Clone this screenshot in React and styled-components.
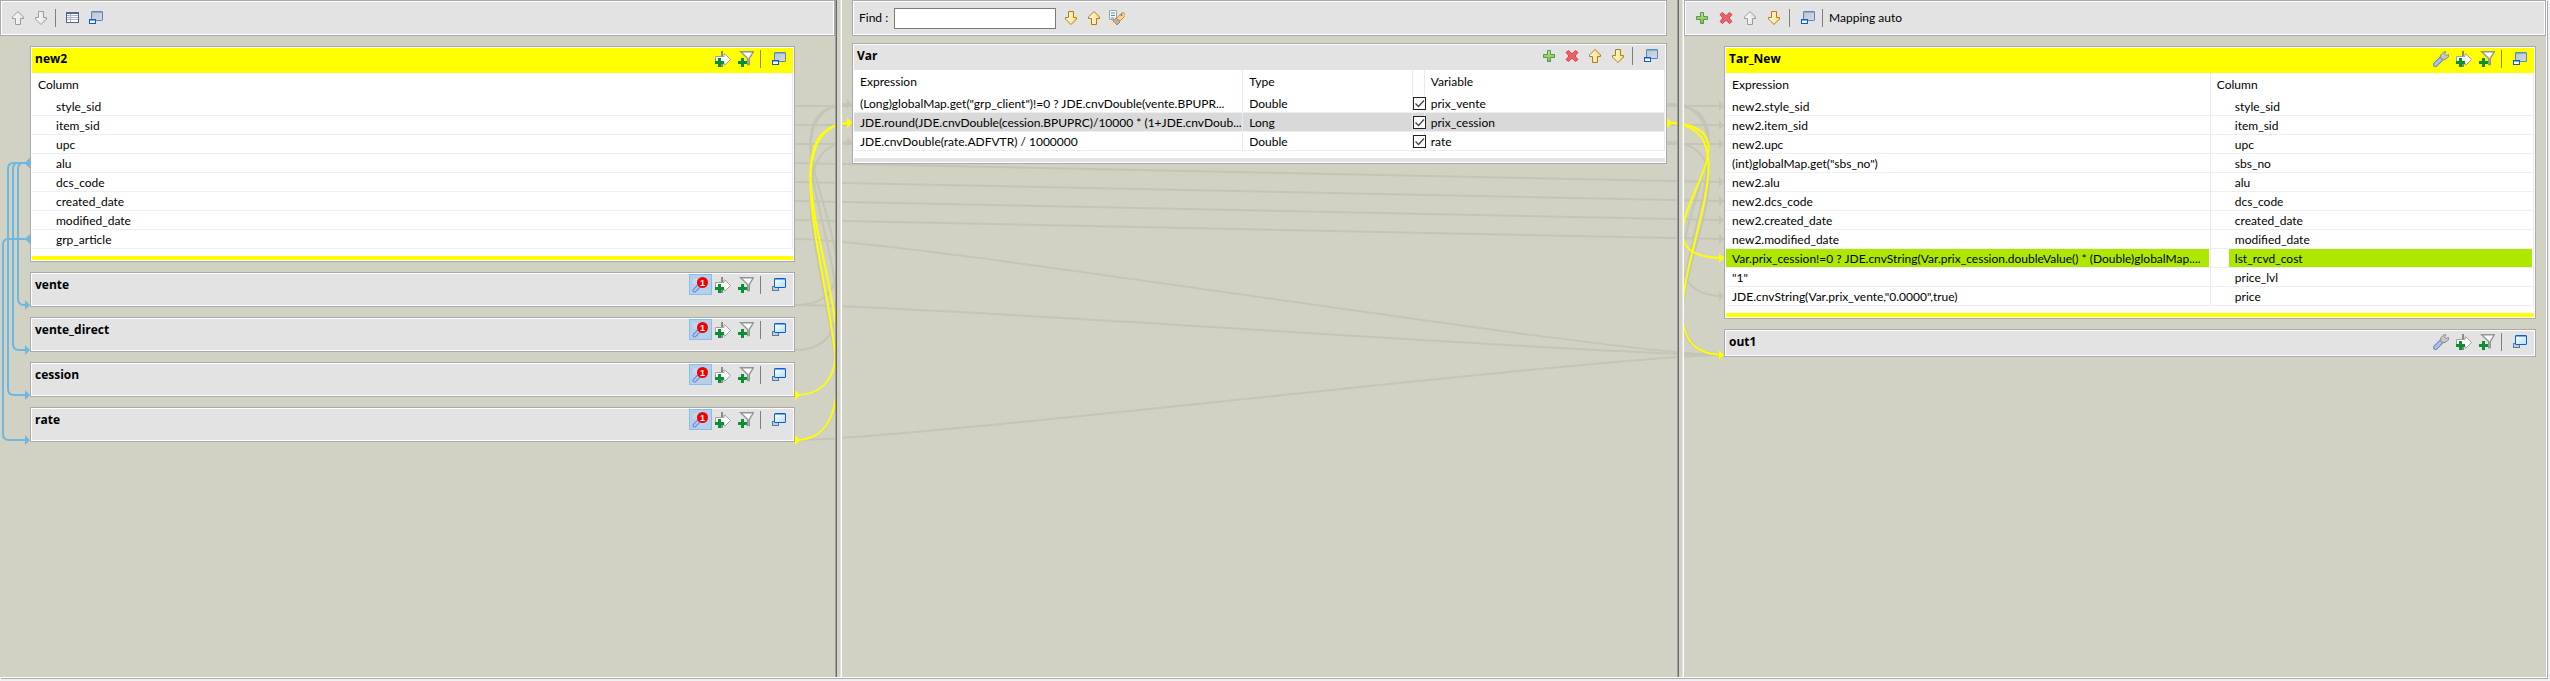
import React from "react";
import styled, { createGlobalStyle, css } from "styled-components";

const color = {
  canvas: "#d1d2c3",
  bar: "#e3e3e3",
  edge: "#a9a9af",
  yellow: "#ffff00",
  lime: "#aee800",
  wire: "#c4c5b6",
  join: "#6cb8e2",
  line: "#eeeef0",
  divider: "#e4ebf4",
};

const GlobalStyle = createGlobalStyle`
  *, *::before, *::after { box-sizing: border-box; }
  body {
    margin: 0;
    background: #f0f0f0;
    color: #000;
    font: 12px/16px Lato, "Open Sans", sans-serif;
  }
`;

/* ---------- layout ---------- */

const Frame = styled.main`
  display: flex;
  min-height: 100vh;
  padding: 0 2px 2px 0;
`;

const Workspace = styled.div`
  position: relative;
  flex: 1;
  min-width: 0;
  display: grid;
  grid-template-columns: minmax(0, 835fr) 7px minmax(0, 835fr) 7px minmax(0, 862fr);
  background: ${color.canvas};
  border: solid #fff;
  border-width: 0 1px 1px 0;
  box-shadow: 1px 1px 0 ${color.edge};
  margin: 0 1px 1px 0;
`;

const Wires = styled.svg`
  position: absolute;
  top: 0;
  left: 0;
  width: 100%;
  height: 677px;
  pointer-events: none;
`;

const Pane = styled.section`
  position: relative;
  display: flex;
  flex-direction: column;
  min-width: 0;
  padding: 0 ${(p) => p.$inset || 0}px;
`;

const Sash = styled.div`
  position: relative;
  background: ${color.canvas};
  border-left: 1px solid #a0a0a0;
  border-right: 1px solid #fff;
  box-shadow: inset 1px 0 #696969, inset -1px 0 #e3e3e3;
`;

const bevel = css`
  border: 1px solid ${color.edge};
  background: ${color.bar};
  box-shadow: inset 0 0 0 1px #fff;
`;

const Toolbar = styled.div`
  ${bevel}
  display: flex;
  align-items: center;
  height: 36px;
  padding: 0 6px;
  gap: ${(p) => p.$gap || 0}px;
`;

const Tables = styled.div`
  display: flex;
  flex-direction: column;
  gap: 10px;
  padding: ${(p) => p.$pad};
`;

const Card = styled.article`
  background: #fff;
  border: 1px solid ${color.edge};
  padding: 1px;
`;

const CardHeader = styled.header`
  display: flex;
  justify-content: space-between;
  align-items: flex-start;
  height: ${(p) => p.$height || 25}px;
  padding: 0 3px;
  background: ${(p) => (p.$active ? color.yellow : color.bar)};
`;

const CardTitle = styled.h2`
  margin: 0;
  padding-top: 3px;
  font-family: "Open Sans", "Noto Sans", sans-serif;
  font-size: 12px;
  line-height: 16px;
  font-weight: 700;
`;

const CardFooter = styled.div`
  height: 4px;
  margin-top: 7px;
  background: ${(p) => (p.$active ? color.yellow : color.bar)};
`;

const Actions = styled.div`
  display: flex;
  align-items: center;
`;

const ToolButton = styled.button`
  display: flex;
  align-items: center;
  justify-content: center;
  width: 23px;
  height: 21px;
  padding: 0 1px 0 0;
  border: 1px solid ${(p) => (p.$pressed ? "#86bfee" : "transparent")};
  background: ${(p) => (p.$pressed ? "#b6d0e8" : "none")};
  svg { display: block; }
`;

const TextButton = styled.button`
  padding: 0 3px;
  border: 0;
  background: none;
  font: inherit;
  color: inherit;
`;

const Separator = styled.span`
  width: 1px;
  height: 18px;
  margin: 0 ${(p) => p.$after || 5}px 0 2px;
  background: ${(p) => (p.$active ? "#8c8c1e" : "#7f7f7f")};
`;

const FindLabel = styled.label`
  display: flex;
  align-items: center;
  gap: 6px;
  padding-right: 4px;
`;

const FindInput = styled.input`
  width: 162px;
  height: 21px;
  padding: 0 3px;
  border: 1px solid #7a7a7a;
  background: #fff;
  font: inherit;
`;

/* ---------- table of columns ---------- */

const Grid = styled.table`
  width: 100%;
  table-layout: fixed;
  border-collapse: separate;
  border-spacing: 0;
`;

const Head = styled.th`
  height: 24px;
  padding: 0 0 0 6px;
  border-right: 1px solid ${color.divider};
  font-weight: 400;
  text-align: left;
  white-space: nowrap;
`;

const Cell = styled.td`
  height: 19px;
  padding: 0 1px 0 ${(p) => p.$indent || 0}px;
  border-bottom: 1px solid ${color.line};
  border-right: 1px solid ${color.divider};
  background: ${(p) => (p.$selected ? "#d9d9d9" : "#fff")};
`;

const Value = styled.div`
  height: 18px;
  padding: 2px 0 0 6px;
  line-height: 16px;
  white-space: nowrap;
  background: ${(p) => (p.$lit ? color.lime : "none")};
`;

const CheckCell = styled(Cell)`
  padding: 0;
`;

const Check = styled.input`
  appearance: none;
  display: block;
  width: 13px;
  height: 13px;
  margin: 0;
  border: 1px solid #222;
  background: #fff;
  &:not(:checked) + svg { display: none; }
`;

const CheckBox = styled.label`
  position: relative;
  display: block;
  width: 13px;
  z-index: 1;
  svg { position: absolute; top: 0; left: 0; pointer-events: none; }
`;

/* ---------- icons ---------- */

const Icon = ({ children, ...rest }) => (
  <svg width="16" height="16" viewBox="0 0 16 16" aria-hidden="true" {...rest}>{children}</svg>
);

const Gradients = styled.svg`
  position: absolute;
`;

const Defs = () => (
  <Gradients width="0" height="0" aria-hidden="true">
    <defs>
      <linearGradient id="gold" x1="0" x2="1"><stop offset="0" stopColor="#fffdf0" /><stop offset="1" stopColor="#ffdc70" /></linearGradient>
      <linearGradient id="grey" x1="0" x2="1"><stop offset="0" stopColor="#fdfdfd" /><stop offset="1" stopColor="#e0e0e0" /></linearGradient>
      <linearGradient id="green" x1="0" x2="0" y1="0" y2="1"><stop offset="0" stopColor="#c6e08a" /><stop offset="1" stopColor="#8ab83a" /></linearGradient>
      <linearGradient id="steel" x1="0" x2="1" y1="0" y2="1"><stop offset="0" stopColor="#b4c6d6" /><stop offset="1" stopColor="#d8dade" /></linearGradient>
      <linearGradient id="glass" x1="0" x2="1" y1="0" y2="1"><stop offset="0" stopColor="#ffffff" /><stop offset="1" stopColor="#b4dcfa" /></linearGradient>
    </defs>
  </Gradients>
);

const ArrowUp = ({ off }) => (
  <Icon><path d="M8 1.500 13.500 7v1.500h-3v6h-5v-6h-3V7z" fill={off ? "url(#grey)" : "url(#gold)"} stroke={off ? "#9b9b9b" : "#b57a14"} /></Icon>
);
const ArrowDown = ({ off }) => (
  <Icon><path d="M8 14.500 2.500 9V7.500h3v-6h5v6h3V9z" fill={off ? "url(#grey)" : "url(#gold)"} stroke={off ? "#9b9b9b" : "#b57a14"} /></Icon>
);
const Plus = () => (
  <Icon><path d="M6.500 2.500h3v4h4v3h-4v4h-3v-4h-4v-3h4z" fill="url(#green)" stroke="#4a9a5c" /></Icon>
);
const Cross = () => (
  <Icon><path d="M4.500 2.500 8 5.700l3.500-3.200 2.500 2L11 8l3 3.500-2.500 2L8 10.300l-3.500 3.200-2.500-2L5 8 2 4.500z" fill="#ee6068" stroke="#cf4650" /></Icon>
);
const Minimize = () => (
  <Icon>
    <rect x="4.500" y="1.500" width="11" height="9" rx="0.500" fill="url(#steel)" stroke="#5a86b8" />
    <path d="M5 2h10" stroke="#5a8cc8" />
    <rect x="2.500" y="9.500" width="6" height="4" fill="#fff" stroke="#0a5fcc" />
    <path d="M2 10h7" stroke="#0a5fcc" />
  </Icon>
);
const Restore = () => (
  <Icon>
    <rect x="2.500" y="9.500" width="6" height="4" fill="#c8ccd0" stroke="#5078ac" />
    <rect x="4.500" y="1.500" width="11" height="9" rx="0.500" fill="url(#glass)" stroke="#0a5fcc" />
    <path d="M5 2h10" stroke="#0a5fcc" />
  </Icon>
);
const Sheet = () => (
  <Icon>
    <rect x="2.500" y="2.500" width="12" height="10" fill="#fff" stroke="#56657f" />
    <path d="M2 3h13" stroke="#56688c" strokeWidth="2" />
    <path d="M3 5.500h11M3 7.500h11M3 9.500h11M6.500 4v8" stroke="#a9b4c6" />
  </Icon>
);
const GreenPlus = () => (
  <path d="M3 7h3v3h3v3H6v3H3v-3H0v-3h3z" fill="#0a8f34" />
);
const AddExpression = () => (
  <Icon>
    <path d="M7 0v5M7 11v5" stroke="#8a8a8a" strokeWidth="2" />
    <path d="M.5 5.500h8.500v-2.500h1l5.500 5.500-5.500 5.500h-1v-2.500H.5z" fill="#fff" stroke="#a5a196" />
    <GreenPlus />
  </Icon>
);
const AddFilter = () => (
  <Icon>
    <path d="M2.700.8h12.600L11.300 7.500V13.500h-1.600V7.500z" fill="#fff" stroke="#949494" strokeWidth="1.400" />
    <GreenPlus />
  </Icon>
);
const Wrench = () => (
  <Icon>
    <path d="M2.500 13.500 8.500 7.500" stroke="#7088c0" strokeWidth="5" strokeLinecap="round" />
    <path d="M2.500 13.500 8.500 7.500" stroke="#a8c4ee" strokeWidth="3" strokeLinecap="round" />
    <path d="M8 8 7.500 4 11 .8h2L11.500 3l1.500 1.500 2.500-1V6L12 8.500z" fill="#c6c6c6" stroke="#8f8f8f" />
  </Icon>
);
const Lens = () => (
  <Icon>
    <path d="M1 1h6v6H1z" fill="#c6d8ea" />
    <path d="M2.500 13.500 7 9" stroke="#6a86cc" strokeWidth="4" strokeLinecap="round" />
    <path d="M2.500 13.500 7 9" stroke="#b4caf4" strokeWidth="2" strokeLinecap="round" />
    <circle cx="10.500" cy="5.500" r="5.500" fill="#f40000" />
    <text x="10.500" y="9" textAnchor="middle" fontSize="9" fontWeight="700" fill="#fff">1</text>
  </Icon>
);
const Torch = () => (
  <Icon>
    <path d="M0 16 3 11l4 3-2 2z" fill="#ffe0a0" />
    <path d="M.5.500h7v9h-7z" fill="#f4f8ff" stroke="#9aa888" />
    <path d="M2 3h4M2 5.500h4M2 8h3" stroke="#5a86c8" />
    <path d="M4 10.500 7 8l4 4-3 3z" fill="#b4b4b8" stroke="#8c8c94" />
    <path d="M7.500 8.500 12 3.500q2-2 3.500 0t0 3L11 11z" fill="#fcd488" stroke="#d08a30" />
    <circle cx="12.500" cy="5" r="1" fill="#4a78b8" />
  </Icon>
);
const Tick = () => (
  <svg width="13" height="13" viewBox="0 0 13 13" aria-hidden="true">
    <path d="m2.500 6.500 3 3 5.500-6" fill="none" stroke="#444" strokeWidth="1.300" />
  </svg>
);

const Tool = ({ label, pressed, children }) => (
  <ToolButton type="button" aria-label={label} title={label} $pressed={pressed}>{children}</ToolButton>
);

/* ---------- links between tables ---------- */

const BEND = 115;
const link = (x1, y1, x2, y2) => `M${x1} ${y1}C${x1 + BEND} ${y1} ${x2 - BEND} ${y2} ${x2} ${y2}`;

const IN = 795;
const VAR_L = 852;
const VAR_R = 1667;
const OUT = 1724;

const greyLinks = [
  [IN, 106, OUT, 106], [IN, 125, OUT, 125], [IN, 144, OUT, 144], [IN, 163, OUT, 182],
  [IN, 182, OUT, 201], [IN, 201, OUT, 220], [IN, 220, OUT, 239], [IN, 239, OUT, 355],
  [IN, 305, OUT, 355], [IN, 440, OUT, 355],
  [IN, 305, VAR_L, 104], [IN, 350, VAR_L, 104], [IN, 440, VAR_L, 142],
  [VAR_R, 104, OUT, 296], [VAR_R, 104, OUT, 355], [VAR_R, 142, OUT, 355],
];
const yellowLinks = [
  [IN, 395, VAR_L, 123], [IN, 440, VAR_L, 123], [VAR_R, 123, OUT, 258], [VAR_R, 123, OUT, 355],
];
const joins = [
  [163, 18, 305], [163, 13, 350], [163, 8, 395], [239, 3, 440],
];

const head = (x, y) => `M${x - 5} ${y - 5}v10l5-5z`;
const tail = (x, y) => `M${x} ${y - 5}v10l5-5z`;

const LinkLayer = () => (
  <Wires viewBox="0 0 2546 677" preserveAspectRatio="none" aria-hidden="true">
    <g fill="none" stroke={color.wire} strokeWidth="2">
      {greyLinks.map((l) => <path key={l.join()} d={link(...l)} />)}
    </g>
    <g fill={color.wire}>
      {greyLinks.map((l) => <path key={l.join()} d={head(l[2], l[3])} />)}
    </g>
    <g fill="none" stroke={color.yellow} strokeWidth="2">
      {yellowLinks.map((l) => <path key={l.join()} d={link(...l)} />)}
    </g>
    <g fill={color.yellow}>
      {yellowLinks.map((l) => <path key={l.join()} d={head(l[2], l[3]) + tail(l[0], l[1])} />)}
    </g>
    <g fill="none" stroke={color.join} strokeWidth="2">
      {joins.map(([from, x, to]) => (
        <path key={to} d={`M30 ${from}H${x + 5}Q${x} ${from} ${x} ${from + 6}V${to - 6}Q${x} ${to} ${x + 6} ${to}H27`} />
      ))}
    </g>
    <g fill={color.join}>
      {joins.map(([from, , to]) => <path key={to} d={`M30 ${from - 5}v10l-5-5z` + head(30, to)} />)}
    </g>
  </Wires>
);

/* ---------- data ---------- */

const inputColumns = ["style_sid", "item_sid", "upc", "alu", "dcs_code", "created_date", "modified_date", "grp_article"];
const lookups = ["vente", "vente_direct", "cession", "rate"];
const variables = [
  { expression: '(Long)globalMap.get("grp_client")!=0 ? JDE.cnvDouble(vente.BPUPR...', type: "Double", name: "prix_vente" },
  { expression: "JDE.round(JDE.cnvDouble(cession.BPUPRC)/10000 * (1+JDE.cnvDoub...", type: "Long", name: "prix_cession", selected: true },
  { expression: "JDE.cnvDouble(rate.ADFVTR) / 1000000", type: "Double", name: "rate" },
];
const outputs = [
  ["new2.style_sid", "style_sid"],
  ["new2.item_sid", "item_sid"],
  ["new2.upc", "upc"],
  ['(int)globalMap.get("sbs_no")', "sbs_no"],
  ["new2.alu", "alu"],
  ["new2.dcs_code", "dcs_code"],
  ["new2.created_date", "created_date"],
  ["new2.modified_date", "modified_date"],
  ["Var.prix_cession!=0 ? JDE.cnvString(Var.prix_cession.doubleValue() * (Double)globalMap....", "lst_rcvd_cost", true],
  ['"1"', "price_lvl"],
  ['JDE.cnvString(Var.prix_vente,"0.0000",true)', "price"],
];

/* ---------- panes ---------- */

const TableActions = ({ active, lookup, output }) => (
  <Actions>
    {lookup && <Tool label="Lookup properties" pressed><Lens /></Tool>}
    {output && <Tool label="Settings"><Wrench /></Tool>}
    <Tool label="Add expression"><AddExpression /></Tool>
    <Tool label="Add filter"><AddFilter /></Tool>
    <Separator $active={active} $after={6} />
    <Tool label={active ? "Minimize" : "Restore"}>{active ? <Minimize /> : <Restore />}</Tool>
  </Actions>
);

const InputPane = () => (
  <Pane>
    <Toolbar>
      <Tool label="Move up"><ArrowUp off /></Tool>
      <Tool label="Move down"><ArrowDown off /></Tool>
      <Separator />
      <Tool label="Schema"><Sheet /></Tool>
      <Tool label="Minimize all"><Minimize /></Tool>
    </Toolbar>
    <Tables $pad="10px 40px 10px 30px">
      <Card>
        <CardHeader $active>
          <CardTitle>new2</CardTitle>
          <TableActions active />
        </CardHeader>
        <Grid>
          <thead><tr><Head>Column</Head></tr></thead>
          <tbody>
            {inputColumns.map((c) => <tr key={c}><Cell $indent={18}><Value>{c}</Value></Cell></tr>)}
          </tbody>
        </Grid>
        <CardFooter $active />
      </Card>
      {lookups.map((name) => (
        <Card key={name}>
          <CardHeader $height={31}>
            <CardTitle>{name}</CardTitle>
            <TableActions lookup />
          </CardHeader>
        </Card>
      ))}
    </Tables>
  </Pane>
);

const VarPane = () => (
  <Pane $inset={10}>
    <Toolbar>
      <FindLabel>Find :<FindInput type="text" /></FindLabel>
      <Tool label="Next"><ArrowDown /></Tool>
      <Tool label="Previous"><ArrowUp /></Tool>
      <Tool label="Highlight"><Torch /></Tool>
    </Toolbar>
    <Tables $pad="7px 0 10px">
      <Card>
        <CardHeader>
          <CardTitle>Var</CardTitle>
          <Actions>
            <Tool label="Add variable"><Plus /></Tool>
            <Tool label="Remove variable"><Cross /></Tool>
            <Tool label="Move up"><ArrowUp /></Tool>
            <Tool label="Move down"><ArrowDown /></Tool>
            <Separator $after={6} />
            <Tool label="Minimize"><Minimize /></Tool>
          </Actions>
        </CardHeader>
        <Grid>
          <colgroup>
            <col width="48%" /><col width="20.9%" /><col width="12" /><col />
          </colgroup>
          <thead>
            <tr><Head>Expression</Head><Head>Type</Head><Head /><Head>Variable</Head></tr>
          </thead>
          <tbody>
            {variables.map((v) => (
              <tr key={v.name}>
                <Cell $selected={v.selected}><Value>{v.expression}</Value></Cell>
                <Cell $selected={v.selected}><Value>{v.type}</Value></Cell>
                <CheckCell $selected={v.selected}>
                  <CheckBox>
                    <Check type="checkbox" defaultChecked aria-label={`${v.name} nullable`} />
                    <Tick />
                  </CheckBox>
                </CheckCell>
                <Cell $selected={v.selected}><Value>{v.name}</Value></Cell>
              </tr>
            ))}
          </tbody>
        </Grid>
        <CardFooter />
      </Card>
    </Tables>
  </Pane>
);

const OutputPane = () => (
  <Pane>
    <Toolbar $gap={1}>
      <Tool label="Add output"><Plus /></Tool>
      <Tool label="Remove output"><Cross /></Tool>
      <Tool label="Move up"><ArrowUp off /></Tool>
      <Tool label="Move down"><ArrowDown /></Tool>
      <Separator />
      <Tool label="Minimize all"><Minimize /></Tool>
      <Separator $after={2} />
      <TextButton type="button">Mapping auto</TextButton>
    </Toolbar>
    <Tables $pad="10px 10px 10px 40px">
      <Card>
        <CardHeader $active>
          <CardTitle>Tar_New</CardTitle>
          <TableActions active output />
        </CardHeader>
        <Grid>
          <colgroup><col width="60%" /><col /></colgroup>
          <thead><tr><Head>Expression</Head><Head>Column</Head></tr></thead>
          <tbody>
            {outputs.map(([expression, column, lit]) => (
              <tr key={column}>
                <Cell><Value $lit={lit}>{expression}</Value></Cell>
                <Cell $indent={18}><Value $lit={lit}>{column}</Value></Cell>
              </tr>
            ))}
          </tbody>
        </Grid>
        <CardFooter $active />
      </Card>
      <Card>
        <CardHeader $height={24}>
          <CardTitle>out1</CardTitle>
          <TableActions output />
        </CardHeader>
      </Card>
    </Tables>
  </Pane>
);

export default function App() {
  return (
    <>
      <GlobalStyle />
      <Defs />
      <Frame>
        <Workspace>
          <LinkLayer />
          <InputPane />
          <Sash />
          <VarPane />
          <Sash />
          <OutputPane />
        </Workspace>
      </Frame>
    </>
  );
}
